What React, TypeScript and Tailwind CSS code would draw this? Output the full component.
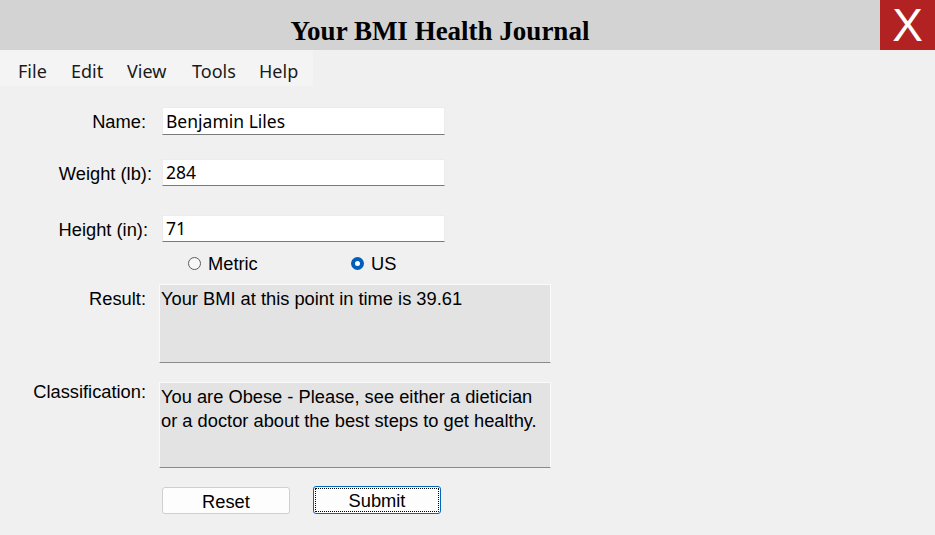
import React from 'react';

const sans = "font-['Liberation_Sans',Arial,sans-serif]";
const ui = "font-['Noto_Sans','Open_Sans',sans-serif]";

const menuItems = [
  { label: 'File', w: 'w-[53px]' },
  { label: 'Edit', w: 'w-[56px]' },
  { label: 'View', w: 'w-[65px]' },
  { label: 'Tools', w: 'w-[67px]' },
  { label: 'Help', w: 'w-[54px]' },
];

const Field = ({ value }: { value: string }) => (
  <div
    className={`flex h-full w-[283px] items-center border border-[#ececec] border-b-[#7a7a7a] bg-white pl-[3px] text-[17.5px] text-black ${ui}`}
  >
    {value}
  </div>
);

const Radio = ({ checked }: { checked?: boolean }) =>
  checked ? (
    <span className="flex h-[13px] w-[13px] items-center justify-center rounded-full bg-[#005fb8]">
      <span className="h-[5px] w-[5px] rounded-full bg-white" />
    </span>
  ) : (
    <span className="h-[13px] w-[13px] rounded-full border border-[#5c5c5c] bg-[#f7f7f7]" />
  );

const App = () => {
  return (
    <div className={`flex h-[535px] w-[935px] flex-col overflow-hidden bg-[#f0f0f0] ${sans}`}>
      {/* title bar */}
      <div className="flex h-[50px] shrink-0 bg-[#d3d3d3]">
        <div className="flex flex-1 items-center justify-center pt-[12px]">
          <h1 className="font-['Liberation_Serif','Times_New_Roman',serif] text-[27px] font-bold text-black">
            Your BMI Health Journal
          </h1>
        </div>
        <div className="flex w-[55px] items-center justify-center bg-[#b22222] text-[46px] leading-none text-white">
          X
        </div>
      </div>

      {/* menu */}
      <div className={`flex h-[36px] w-[313px] shrink-0 items-center bg-[#f4f4f4] pl-[18px] pt-[6px] text-[18px] text-[#1a1a1a] ${ui}`}>
        {menuItems.map((m) => (
          <span key={m.label} className={m.w}>
            {m.label}
          </span>
        ))}
      </div>

      <div className="flex flex-col text-[18.3px] leading-[21px] text-black">
        <div className="mt-[21px] flex h-[28px] items-center">
          <span className="mt-[1px] w-[146px] text-right">Name:</span>
          <div className="ml-[16px] h-full">
            <Field value="Benjamin Liles" />
          </div>
        </div>

        <div className="mt-[24px] flex h-[27px] items-center">
          <span className="mt-[1px] w-[152px] text-right">Weight (lb):</span>
          <div className="ml-[10px] h-full">
            <Field value="284" />
          </div>
        </div>

        <div className="mt-[29px] flex h-[27px] items-center">
          <span className="mt-[1px] w-[148px] text-right">Height (in):</span>
          <div className="ml-[14px] h-full">
            <Field value="71" />
          </div>
        </div>

        <div className="mt-[11px] flex h-[20px] items-center">
          <div className="ml-[188px] flex w-[163px] items-center gap-[7px]">
            <Radio />
            <span>Metric</span>
          </div>
          <div className="flex items-center gap-[7px]">
            <Radio checked />
            <span>US</span>
          </div>
        </div>

        <div className="mt-[11px] flex">
          <span className="mt-[4px] w-[146px] text-right">Result:</span>
          <div className="ml-[13px] h-[79px] w-[392px] border border-[#fafafa] border-b-[#8a8a8a] bg-[#e3e3e3] pl-[1px] pt-[3px]">
            Your BMI at this point in time is 39.61
          </div>
        </div>

        <div className="mt-[19px] flex">
          <span className="mt-[-1px] w-[146px] text-right">Classification:</span>
          <div className="ml-[13px] h-[86px] w-[392px] border border-[#fafafa] border-b-[#8a8a8a] bg-[#e3e3e3] pl-[1px] pt-[2px] leading-[24px]">
            You are Obese - Please, see either a dietician
            <br />
            or a doctor about the best steps to get healthy.
          </div>
        </div>

        <div className="mt-[19px] flex items-start">
          <button className="ml-[162px] h-[27px] w-[128px] rounded-[3px] border border-[#cfcfcf] bg-[#fdfdfd] pt-[1px] text-[18.3px]">
            Reset
          </button>
          <button className="ml-[23px] mt-[-1px] h-[28px] w-[128px] rounded-[3px] border border-[#0067c0] bg-[#fdfdfd] pt-[1px] text-[18.3px] outline-1 outline-offset-[-3px] outline-black outline-dotted">
            Submit
          </button>
        </div>
      </div>
    </div>
  );
};

export default App;
